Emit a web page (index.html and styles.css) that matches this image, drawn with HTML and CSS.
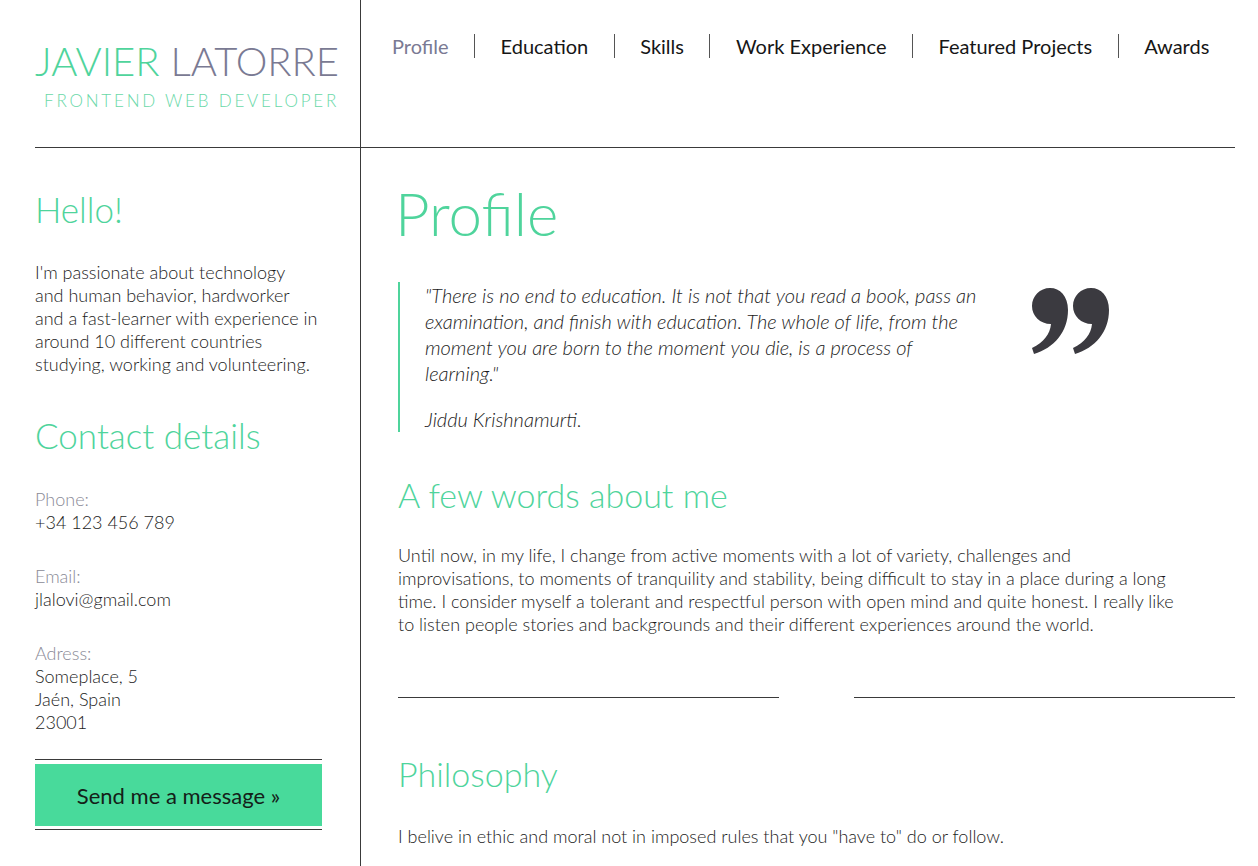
FILE: index.html
```html
<!DOCTYPE html>
<html lang="en">
<head>
<meta charset="utf-8">
<title>Javier Latorre - Frontend Web Developer</title>
<link rel="stylesheet" href="styles.css">
</head>
<body>
<div class="page">
  <aside class="sidebar">
    <header class="brand">
      <div class="brand-inner">
        <div class="name"><span class="first">JAVIER</span> <span class="last">LATORRE</span></div>
        <div class="role">FRONTEND WEB DEVELOPER</div>
      </div>
    </header>
    <div class="side-content">
      <h2 class="side-title">Hello!</h2>
      <p class="intro">I'm passionate about technology<br>and human behavior, hardworker<br>and a fast-learner with experience in<br>around 10 different countries<br>studying, working and volunteering.</p>
      <h2 class="side-title contact-title">Contact details</h2>
      <div class="contact-group">
        <div class="label">Phone:</div>
        <div class="value">+34 123 456 789</div>
      </div>
      <div class="contact-group">
        <div class="label">Email:</div>
        <div class="value">jlalovi@gmail.com</div>
      </div>
      <div class="contact-group">
        <div class="label">Adress:</div>
        <div class="value">Someplace, 5<br>Jaén, Spain<br>23001</div>
      </div>
      <div class="button-wrap">
        <a class="button" href="#">Send me a message »</a>
      </div>
    </div>
  </aside>
  <main class="main">
    <nav class="nav">
      <a class="nav-item active" href="#">Profile</a>
      <a class="nav-item" href="#">Education</a>
      <a class="nav-item" href="#">Skills</a>
      <a class="nav-item" href="#">Work Experience</a>
      <a class="nav-item" href="#">Featured Projects</a>
      <a class="nav-item" href="#">Awards</a>
    </nav>
    <section class="content">
      <h1 class="page-title">Profile</h1>
      <blockquote class="quote">
        <div class="quote-body">
          <p class="quote-text">"There is no end to education. It is not that you read a book, pass an examination, and finish with education. The whole of life, from the moment you are born to the moment you die, is a process of learning."</p>
          <p class="quote-author">Jiddu Krishnamurti.</p>
        </div>
        <svg class="quote-mark" width="80" height="66" viewBox="0 0 80 66" aria-hidden="true">
          <path d="M20 0 C30 0 38 8 38 22 C38 44 24 60 4 66 L2 60 C14 54 20 46 21 36 C10 36 2 28 2 18 C2 8 10 0 20 0 Z" fill="#3b3a40"/>
          <path transform="translate(41 0)" d="M20 0 C30 0 38 8 38 22 C38 44 24 60 4 66 L2 60 C14 54 20 46 21 36 C10 36 2 28 2 18 C2 8 10 0 20 0 Z" fill="#3b3a40"/>
        </svg>
      </blockquote>
      <h2 class="section-title">A few words about me</h2>
      <p class="text about-text">Until now, in my life, I change from active moments with a lot of variety, challenges and improvisations, to moments of tranquility and stability, being difficult to stay in a place during a long time. I consider myself a tolerant and respectful person with open mind and quite honest. I really like to listen people stories and backgrounds and their different experiences around the world.</p>
      <div class="divider"><span class="rule"></span><span class="divider-gap"></span><span class="rule"></span></div>
      <h2 class="section-title philosophy-title">Philosophy</h2>
      <p class="text philosophy-text">I belive in ethic and moral not in imposed rules that you "have to" do or follow.</p>
    </section>
  </main>
</div>
</body>
</html>
```

FILE: styles.css
```css
* { box-sizing: border-box; }

html, body {
  margin: 0;
  padding: 0;
  background: #ffffff;
}

body {
  font-family: "Lato", "Open Sans", sans-serif;
  font-weight: 300;
  color: #1c1c1c;
  height: 866px;
  overflow: hidden;
}

.page {
  display: flex;
  min-height: 866px;
}

/* Sidebar */
.sidebar {
  width: 361px;
  flex: 0 0 361px;
  border-right: 1px solid #3a3a3a;
  padding-left: 35px;
  min-height: 866px;
}

.brand {
  height: 148px;
  border-bottom: 1px solid #3a3a3a;
  padding-top: 37px;
}

.brand-inner {
  display: inline-block;
  text-align: right;
}

.name {
  font-size: 40px;
  line-height: 1.2;
  font-weight: 300;
  white-space: nowrap;
}

.name .first { color: #4fd49c; }
.name .last { color: #7a7a93; }

.role {
  margin-top: 6px;
  font-size: 17px;
  line-height: 1.2;
  letter-spacing: 2.8px;
  color: #6ad8a8;
  font-weight: 300;
  white-space: nowrap;
}

.side-content {
  width: 287px;
}

.side-title {
  margin: 40px 0 0;
  font-size: 35px;
  line-height: 42px;
  font-weight: 300;
  color: #4fd49c;
}

.intro {
  margin: 31px 0 0;
  font-size: 18px;
  line-height: 23px;
  white-space: nowrap;
}

.contact-title {
  margin-top: 38px;
}

.contact-group {
  margin-top: 31px;
  font-size: 18px;
  line-height: 23px;
}

.contact-title + .contact-group {
  margin-top: 32px;
}

.label { color: #8a8a96; }
.value { color: #1c1c1c; }

.button-wrap {
  margin-top: 25px;
  border-top: 1px solid #3a3a3a;
  border-bottom: 1px solid #3a3a3a;
  padding: 4px 0 3px;
}

.button {
  display: flex;
  align-items: center;
  justify-content: center;
  height: 62px;
  background: #48da9b;
  color: #142018;
  font-size: 22px;
  font-weight: 400;
  text-decoration: none;
}

/* Main */
.main {
  flex: 1;
  min-width: 0;
  margin-right: 23px;
}

.nav {
  height: 148px;
  border-bottom: 1px solid #3a3a3a;
  padding: 34px 0 0 31px;
  display: flex;
  align-items: flex-start;
}

.nav-item {
  flex: 0 0 auto;
  white-space: nowrap;
  font-size: 20px;
  line-height: 24px;
  font-weight: 400;
  color: #161616;
  text-decoration: none;
  padding: 0 25.5px;
  border-left: 1px solid #555555;
}

.nav-item:first-child {
  padding-left: 0;
  border-left: none;
}

.nav-item:last-child {
  padding-right: 0;
}

.nav-item.active { color: #7a7a93; }

.content {
  padding-left: 37px;
}

.page-title {
  margin: 29px 0 0 -3px;
  font-size: 60px;
  line-height: 1.2;
  font-weight: 300;
  color: #4fd49c;
}

.quote {
  margin: 33px 0 0;
  border-left: 2px solid #4fd49c;
  padding-left: 25px;
  display: flex;
  align-items: flex-start;
}

.quote-body {
  width: 560px;
  flex: 0 0 560px;
}

.quote-text,
.quote-author {
  margin: 0;
  font-size: 20px;
  line-height: 26px;
  font-style: italic;
  font-weight: 300;
  color: #1c1c1c;
}

.quote-author {
  margin-top: 20px;
}

.quote-mark {
  flex: 0 0 auto;
  margin-left: 45px;
  margin-top: 6px;
}

.section-title {
  margin: 42px 0 0;
  font-size: 34px;
  line-height: 42px;
  font-weight: 300;
  color: #4fd49c;
}

.text {
  margin: 28px 0 0;
  font-size: 18px;
  line-height: 23px;
  color: #1c1c1c;
}

.about-text {
  max-width: 788px;
}

.divider {
  margin-top: 61px;
  display: flex;
  align-items: center;
}

.rule {
  flex: 1;
  height: 1px;
  background: #3a3a3a;
}

.divider-gap {
  width: 75px;
}

.philosophy-title {
  margin-top: 55px;
}

.philosophy-text {
  margin-top: 30px;
}
```
